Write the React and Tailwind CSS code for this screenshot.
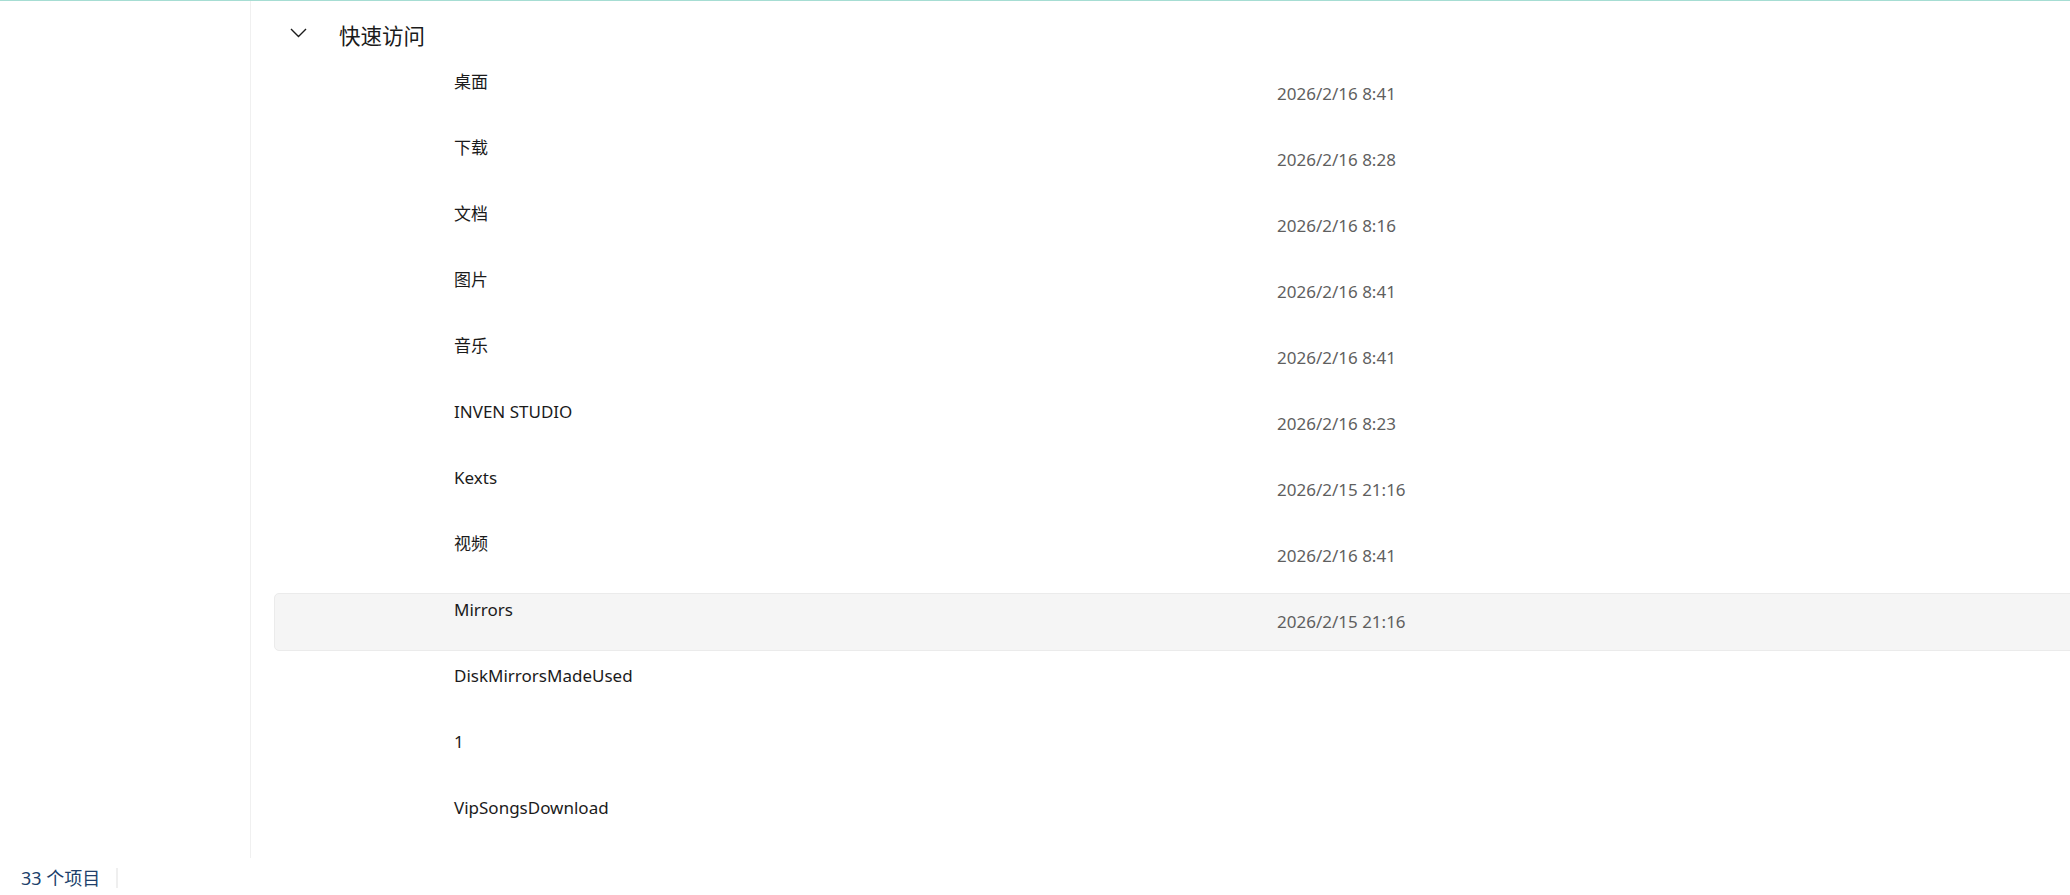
import React from "react";

const rows = [
  { name: "桌面", date: "2026/2/16 8:41" },
  { name: "下载", date: "2026/2/16 8:28" },
  { name: "文档", date: "2026/2/16 8:16" },
  { name: "图片", date: "2026/2/16 8:41" },
  { name: "音乐", date: "2026/2/16 8:41" },
  { name: "INVEN STUDIO", date: "2026/2/16 8:23" },
  { name: "Kexts", date: "2026/2/15 21:16" },
  { name: "视频", date: "2026/2/16 8:41" },
  { name: "Mirrors", date: "2026/2/15 21:16", active: true },
  { name: "DiskMirrorsMadeUsed", date: "" },
  { name: "1", date: "" },
  { name: "VipSongsDownload", date: "" },
];

export default function App() {
  return (
    <div
      className="w-[2070px] h-[895px] bg-white border-t border-[#a6ddd3] flex flex-col overflow-hidden"
      style={{ fontFamily: '"Noto Sans", "Noto Sans CJK SC", sans-serif' }}
    >
      <div className="flex flex-1 min-h-0">
        <aside className="w-[251px] shrink-0 border-r border-[#f0f0f0]" />
        <main className="flex-1 min-w-0 pl-[23px] overflow-hidden">
          <div className="h-[64px] flex items-center pl-[16px]">
            <svg width="17" height="10" viewBox="0 0 17 10" className="shrink-0">
              <path d="M1 1 L8.5 8.5 L16 1" fill="none" stroke="#1b1b1b" strokeWidth="1.4" />
            </svg>
            <span className="ml-[32px] mt-[5px] text-[21.5px] leading-[28px] text-[#1b1b1b]">快速访问</span>
          </div>
          <div className="w-[1900px] flex flex-col gap-[8px]">
            {rows.map((r, i) => (
              <div
                key={i}
                className={
                  r.active
                    ? "h-[58px] flex items-start rounded-[5px] border border-[#ebebeb] bg-[#f5f5f5]"
                    : "h-[58px] flex items-start rounded-[5px] border border-transparent"
                }
              >
                <div className="w-[1002px] shrink-0 pl-[179px] pt-[5px] text-[17px] leading-[22px] text-[#1b1b1b] whitespace-nowrap">
                  {r.name}
                </div>
                <div className="self-center text-[17px] leading-[22px] text-[#5f5f5f] whitespace-nowrap">
                  {r.date}
                </div>
              </div>
            ))}
          </div>
        </main>
      </div>
      <footer className="h-[37px] shrink-0 flex items-center pl-[21px]">
        <span className="mt-[3px] text-[18px] leading-[22px] text-[#203f6b]">33 个项目</span>
        <span className="ml-[16px] mt-[3px] w-[2px] h-[20px] bg-[#efefef]" />
      </footer>
    </div>
  );
}
